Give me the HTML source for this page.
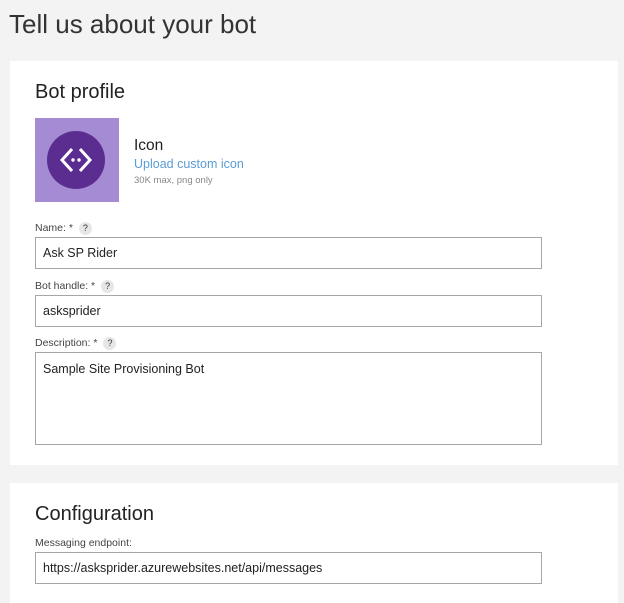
<!DOCTYPE html>
<html><head><style>
body{margin:0;width:624px;height:595px;background:#f3f3f3;font-family:"Liberation Sans",sans-serif;position:relative;overflow:hidden;color:#222}
.a{position:absolute}
.card{position:absolute;left:10px;width:608px;background:#fff}
.inp{position:absolute;left:35px;width:507px;border:1px solid #a6a6a6;background:#fff;font-size:12.5px;color:#222;box-sizing:border-box;padding-left:7px}
.lbl{position:absolute;left:35px;font-size:10.5px;color:#444}
.q{display:inline-block;width:13px;height:13px;border-radius:50%;background:#e6e6e6;font-size:9px;text-align:center;line-height:13px;margin-left:6px;color:#333}
</style></head><body>
<div class="a" style="left:9px;top:9px;font-size:26px;color:#333">Tell us about your bot</div>
<div class="card" style="top:61px;height:404px"></div>
<div class="a" style="left:35px;top:81px;font-size:20px;color:#222">Bot profile</div>
<div class="a" style="left:35px;top:118px;width:84px;height:84px;background:#a58bd3"></div>
<svg class="a" style="left:35px;top:118px" width="84" height="84"><circle cx="41" cy="42" r="29" fill="#5c2d91"/><path d="M37 31 L27 42 L37 53 M45 31 L55 42 L45 53" stroke="#fff" stroke-width="3" fill="none"/><circle cx="38" cy="42" r="1.7" fill="#fff"/><circle cx="44" cy="42" r="1.7" fill="#fff"/></svg>
<div class="a" style="left:134px;top:137px;font-size:15.5px">Icon</div>
<div class="a" style="left:134px;top:157px;font-size:12.5px;color:#5b9bd5">Upload custom icon</div>
<div class="a" style="left:134px;top:175px;font-size:9.5px;color:#888">30K max, png only</div>
<div class="lbl" style="top:222px">Name: *<span class="q">?</span></div>
<div class="inp" style="top:237px;height:32px;line-height:30px">Ask SP Rider</div>
<div class="lbl" style="top:280px">Bot handle: *<span class="q">?</span></div>
<div class="inp" style="top:295px;height:32px;line-height:30px">asksprider</div>
<div class="lbl" style="top:337px">Description: *<span class="q">?</span></div>
<div class="inp" style="top:352px;height:93px;padding-top:9px">Sample Site Provisioning Bot</div>
<div class="card" style="top:483px;height:120px"></div>
<div class="a" style="left:35px;top:503px;font-size:20px">Configuration</div>
<div class="lbl" style="top:537px">Messaging endpoint:</div>
<div class="inp" style="top:552px;height:32px;line-height:30px">https://asksprider.azurewebsites.net/api/messages</div>
</body></html>
